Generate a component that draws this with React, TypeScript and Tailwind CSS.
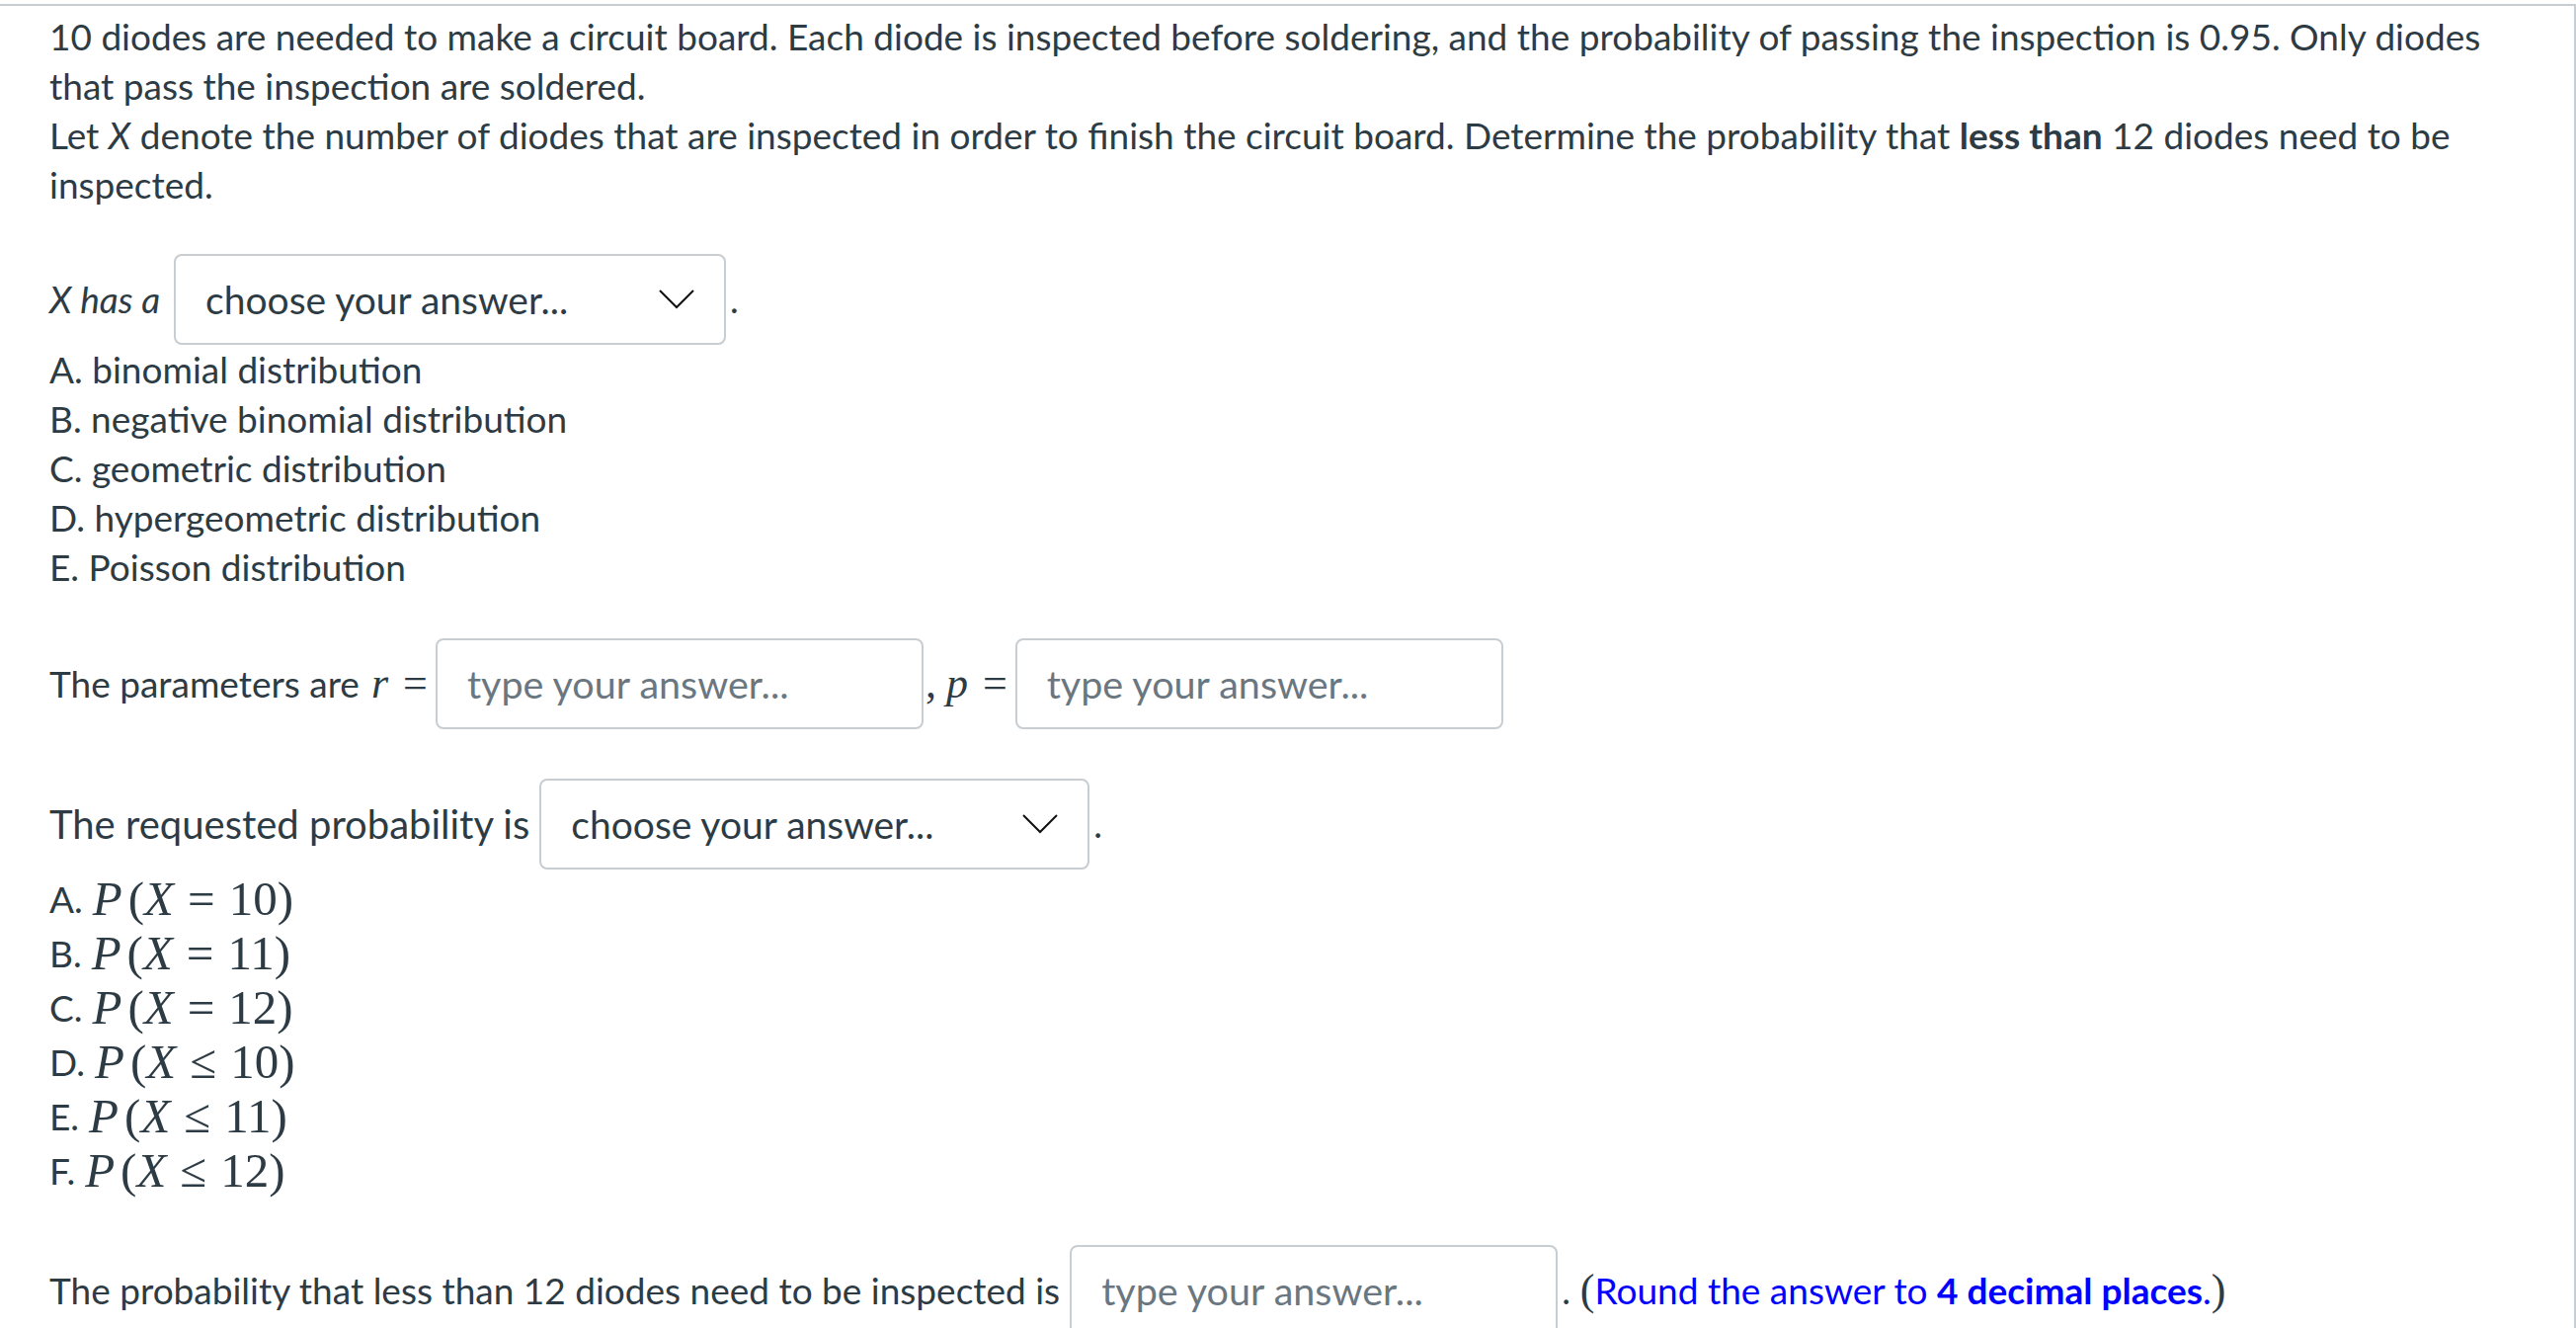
const body = "font-['Lato','Liberation_Sans',sans-serif]";
const serif = "font-['Liberation_Serif','DejaVu_Serif',serif]";

function Chevron() {
  return (
    <svg width="36" height="20" viewBox="0 0 36 20" className="shrink-0">
      <polyline points="1,1 18,18 35,1" fill="none" stroke="#111" strokeWidth="2" />
    </svg>
  );
}

function Dropdown({ w }: { w: string }) {
  return (
    <div
      className={`${w} h-[92px] flex items-center justify-between rounded-lg border-2 border-[#c7cdd1] bg-white pl-[30px] pr-[30px] text-[39px] text-[#2d3b45] ${body}`}
    >
      <span>choose your answer...</span>
      <Chevron />
    </div>
  );
}

function Input() {
  return (
    <div
      className={`w-[494px] h-[92px] shrink-0 flex items-center rounded-lg border-2 border-[#c7cdd1] bg-white pl-[30px] text-[39.5px] text-[#6b7780] ${body}`}
    >
      type your answer...
    </div>
  );
}

const mathOpts: [string, string, string][] = [
  ["A.", "=", "10"],
  ["B.", "=", "11"],
  ["C.", "=", "12"],
  ["D.", "≤", "10"],
  ["E.", "≤", "11"],
  ["F.", "≤", "12"],
];

export default function App() {
  return (
    <div className="min-h-screen bg-white pt-[4px]">
      <div
        className={`border-t-2 border-r-2 border-[#c7cdd1] pl-[50px] pr-[44px] pt-[6px] text-[#2d3b45] ${body}`}
      >
        <p className="text-[37px] leading-[50px]">
          10 diodes are needed to make a circuit board. Each diode is inspected before soldering, and the
          probability of passing the inspection is 0.95. Only diodes that pass the inspection are soldered.
          <br />
          Let <i>X</i> denote the number of diodes that are inspected in order to finish the circuit board.
          Determine the probability that <b>less than</b> 12 diodes need to be inspected.
        </p>

        <div className="mt-[45px] flex items-center text-[37px]">
          <i className="mr-[14px]">X has a</i>
          <Dropdown w="w-[559px]" />
          <span className="ml-[4px]">.</span>
        </div>
        <div className="text-[37px] leading-[50px]">
          <div>A. binomial distribution</div>
          <div>B. negative binomial distribution</div>
          <div>C. geometric distribution</div>
          <div>D. hypergeometric distribution</div>
          <div>E. Poisson distribution</div>
        </div>

        <div className="mt-[47px] flex items-center">
          <span className="text-[37px]">The parameters are</span>
          <span className={`${serif} text-[44px] ml-[12px] mr-[8px]`}>
            <i>r</i> <span className="ml-[4px]">=</span>
          </span>
          <Input />
          <span className={`${serif} text-[44px] ml-[2px] mr-[8px]`}>
            ,<i className="ml-[10px]">p</i> <span className="ml-[4px]">=</span>
          </span>
          <Input />
        </div>

        <div className="mt-[50px] flex items-center">
          <span className="text-[40px] mr-[10px]">The requested probability is</span>
          <Dropdown w="w-[557px]" />
          <span className="ml-[4px] text-[37px]">.</span>
        </div>
        <div className="mt-[2px]">
          {mathOpts.map(([k, op, n]) => (
            <div key={k} className="h-[55px] flex items-center">
              <span className="text-[37px] mr-[10px]">{k}</span>
              <span className={`${serif} text-[49px] leading-none`}>
                <i>P</i>
                <span className="ml-[6px]">(</span>
                <i>X</i>
                <span className="mx-[14px]">{op}</span>
                {n})
              </span>
            </div>
          ))}
        </div>

        <div className="mt-[48px] flex items-center text-[37px]">
          <span className="mr-[10px]">The probability that less than 12 diodes need to be inspected is</span>
          <Input />
          <span className="ml-[4px]">.</span>
          <span className={`${serif} ml-[10px] text-[44px]`}>(</span>
          <span className="text-[#0000ff]">
            Round the answer to <b>4 decimal places</b>.
          </span>
          <span className={`${serif} text-[44px]`}>)</span>
        </div>
      </div>
    </div>
  );
}
